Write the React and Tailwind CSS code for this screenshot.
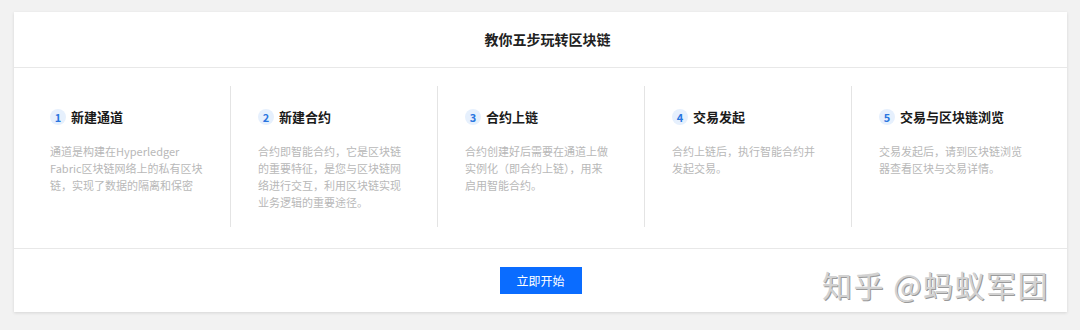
const steps = [
  { n: 1, title: "新建通道", lines: ["通道是构建在Hyperledger", "Fabric区块链网络上的私有区块", "链，实现了数据的隔离和保密"] },
  { n: 2, title: "新建合约", lines: ["合约即智能合约，它是区块链", "的重要特征，是您与区块链网", "络进行交互，利用区块链实现", "业务逻辑的重要途径。"] },
  { n: 3, title: "合约上链", lines: ["合约创建好后需要在通道上做", "实例化（即合约上链），用来", "启用智能合约。"] },
  { n: 4, title: "交易发起", lines: ["合约上链后，执行智能合约并", "发起交易。"] },
  { n: 5, title: "交易与区块链浏览", lines: ["交易发起后，请到区块链浏览", "器查看区块与交易详情。"] },
];

export default function App() {
  return (
    <div
      className="relative h-[330px] w-[1080px] overflow-hidden bg-[#f2f2f2] pl-[14px] pt-[12px]"
      style={{ fontFamily: '"Noto Sans CJK SC", "Noto Sans", sans-serif' }}
    >
      <div className="flex h-[300px] w-[1053px] flex-col bg-white shadow-[0_1px_3px_rgba(0,0,0,0.12)]">
        {/* header */}
        <div className="flex h-[56px] items-center justify-center border-b border-[#e8e8e8] pl-[14px]">
          <span className="text-[14px] font-bold text-[#222]">教你五步玩转区块链</span>
        </div>

        {/* steps */}
        <div className="flex h-[180px] px-[9px] py-[18px]">
          {steps.map((s, i) => (
            <div
              key={s.n}
              className={
                "h-[141px] w-[207px] pl-[27px] pt-[22px] " +
                (i > 0 ? "border-l border-[#e4e4e4]" : "")
              }
            >
              <div className="flex h-[18px] items-center gap-[5px]">
                <span className="flex h-[16px] w-[16px] items-center justify-center rounded-full bg-[#e6f0fd] text-[11px] font-semibold text-[#2a76e0]">
                  {s.n}
                </span>
                <span className="text-[13px] font-bold text-[#1a1a1a]">{s.title}</span>
              </div>
              <div className="mt-[17px] text-[11px] leading-[17px] text-[#b8b8b8]">
                {s.lines.map((l) => (
                  <div key={l} className="whitespace-nowrap">{l}</div>
                ))}
              </div>
            </div>
          ))}
        </div>

        {/* footer */}
        <div className="flex flex-1 items-center justify-center border-t border-[#e8e8e8]">
          <button className="h-[27px] w-[82px] bg-[#0a6cff] text-[12px] text-white">立即开始</button>
        </div>
      </div>

      {/* watermark */}
      <div className="absolute left-[822px] top-[265px] text-[30px] leading-[38px] tracking-[1.5px] text-[#d2d2d2] [text-shadow:1px_1px_0_#9a9a9a]">
        知乎 @蚂蚁军团
      </div>
    </div>
  );
}
